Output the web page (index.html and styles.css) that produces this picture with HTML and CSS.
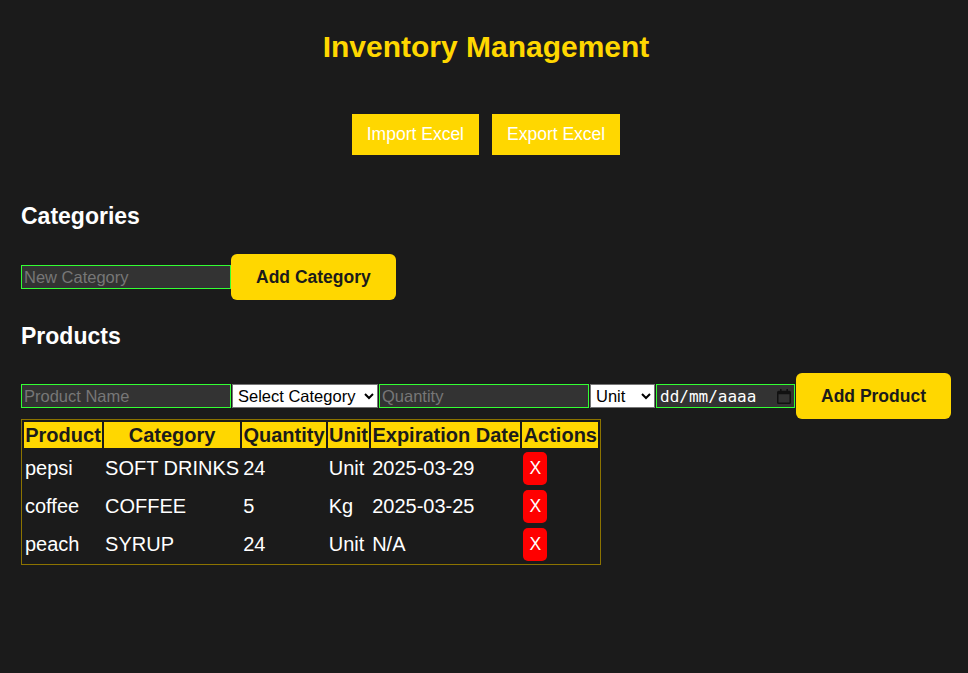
FILE: index.html
```html
<!DOCTYPE html>
<html lang="pt">
<head>
<meta charset="utf-8">
<title>Inventory Management</title>
<link rel="stylesheet" href="styles.css">
</head>
<body>
<div class="app">
  <h1 class="title">Inventory Management</h1>

  <div class="excel-bar">
    <button class="excel-btn">Import Excel</button>
    <button class="excel-btn">Export Excel</button>
  </div>

  <h2 class="section-title">Categories</h2>
  <div class="form-row form-row--tight">
    <input class="field field--wide" type="text" placeholder="New Category">
    <button class="action-btn">Add Category</button>
  </div>

  <h2 class="section-title section-title--products">Products</h2>
  <div class="form-row">
    <input class="field field--wide" type="text" placeholder="Product Name">
    <select class="picker picker--category">
      <option>Select Category</option>
    </select>
    <input class="field field--wide" type="text" placeholder="Quantity">
    <select class="picker picker--unit">
      <option>Unit</option>
    </select>
    <label class="date-field">
      <input class="date-field__input" type="text" value="dd/mm/aaaa" readonly>
      <svg class="date-field__icon" width="14" height="15" viewBox="0 0 14 15" aria-hidden="true">
        <path fill="#111" fill-rule="evenodd" d="M3 0h1.6v1.8h4.8V0H11v1.8h1.4A1.6 1.6 0 0 1 14 3.4v10A1.6 1.6 0 0 1 12.4 15H1.6A1.6 1.6 0 0 1 0 13.4v-10A1.6 1.6 0 0 1 1.6 1.8H3zM1.5 5.2v8.1c0 .1.1.2.2.2h10.6c.1 0 .2-.1.2-.2V5.2z"/>
      </svg>
    </label>
    <button class="action-btn">Add Product</button>
  </div>

  <table class="inventory">
    <thead>
      <tr>
        <th>Product</th>
        <th>Category</th>
        <th>Quantity</th>
        <th>Unit</th>
        <th>Expiration Date</th>
        <th>Actions</th>
      </tr>
    </thead>
    <tbody>
      <tr>
        <td>pepsi</td>
        <td>SOFT DRINKS</td>
        <td>24</td>
        <td>Unit</td>
        <td>2025-03-29</td>
        <td><button class="delete-btn">X</button></td>
      </tr>
      <tr>
        <td>coffee</td>
        <td>COFFEE</td>
        <td>5</td>
        <td>Kg</td>
        <td>2025-03-25</td>
        <td><button class="delete-btn">X</button></td>
      </tr>
      <tr>
        <td>peach</td>
        <td>SYRUP</td>
        <td>24</td>
        <td>Unit</td>
        <td>N/A</td>
        <td><button class="delete-btn">X</button></td>
      </tr>
    </tbody>
  </table>
</div>
</body>
</html>
```

FILE: styles.css
```css
html, body {
  margin: 0;
  padding: 0;
  background: #1b1b1b;
}

body {
  font-family: "Liberation Sans", Arial, sans-serif;
  font-size: 17.5px;
  color: #ffffff;
}

.app {
  padding: 30px 17px 40px 21px;
}

.title {
  margin: 0;
  font-size: 30px;
  line-height: 34px;
  font-weight: bold;
  color: #ffd700;
  text-align: center;
}

.excel-bar {
  margin-top: 50px;
  display: flex;
  justify-content: center;
  gap: 13px;
}

.excel-btn {
  font-family: inherit;
  font-size: 17.5px;
  line-height: 21px;
  padding: 10px 15px;
  border: none;
  border-radius: 0;
  background: #ffd700;
  color: #ffffff;
}

.section-title {
  margin: 25px 0 0;
  font-size: 23px;
  line-height: 26px;
  font-weight: bold;
  color: #ffffff;
}

.excel-bar + .section-title {
  margin-top: 48px;
}

.section-title--products {
  margin-top: 23px;
}

.form-row {
  margin-top: 24px;
  display: flex;
  align-items: center;
  gap: 1px;
  height: 46px;
}

.form-row--tight {
  margin-top: 25px;
  gap: 0;
}

.field {
  box-sizing: border-box;
  height: 24px;
  padding: 1px 2px;
  border: 1px solid #33ff33;
  background: #333333;
  color: #ffffff;
  font-family: inherit;
  font-size: 16.5px;
  outline: none;
}

.field::placeholder {
  color: #777777;
}

.field--wide {
  width: 210px;
}

.picker {
  box-sizing: border-box;
  height: 24px;
  border: 1px solid #767676;
  border-radius: 0;
  background: #ffffff;
  color: #000000;
  font-family: inherit;
  font-size: 16.5px;
  padding: 0 0 0 1px;
}

.picker--category {
  width: 146px;
}

.picker--unit {
  width: 65px;
}

.date-field {
  box-sizing: border-box;
  width: 139px;
  height: 24px;
  border: 1px solid #33ff33;
  background: #333333;
  display: flex;
  align-items: center;
  justify-content: space-between;
  padding: 0 3px 0 3px;
}

.date-field__input {
  width: 100px;
  padding: 0;
  border: none;
  background: transparent;
  color: #ffffff;
  font-family: "DejaVu Sans Mono", "Liberation Mono", monospace;
  font-size: 16px;
  outline: none;
}

.date-field__icon {
  display: block;
  flex: none;
}

.action-btn {
  height: 46px;
  padding: 0 25px;
  border: none;
  border-radius: 6px;
  background: #ffd700;
  color: #1b1b1b;
  font-family: inherit;
  font-size: 17.5px;
  font-weight: bold;
}

.inventory {
  border: 1px solid #8c7300;
  border-spacing: 2px;
  font-size: 20px;
}

.inventory th {
  background: #ffd700;
  color: #1b1b1b;
  font-weight: bold;
  padding: 1px 1.25px;
  line-height: 24px;
  text-align: center;
}

.inventory td {
  padding: 1px;
  height: 34px;
  line-height: 23px;
  vertical-align: middle;
  color: #ffffff;
}

.delete-btn {
  display: block;
  width: 24px;
  height: 33px;
  padding: 0;
  border: none;
  border-radius: 5px;
  background: #ff0000;
  color: #ffffff;
  font-family: inherit;
  font-size: 17.5px;
}
```
